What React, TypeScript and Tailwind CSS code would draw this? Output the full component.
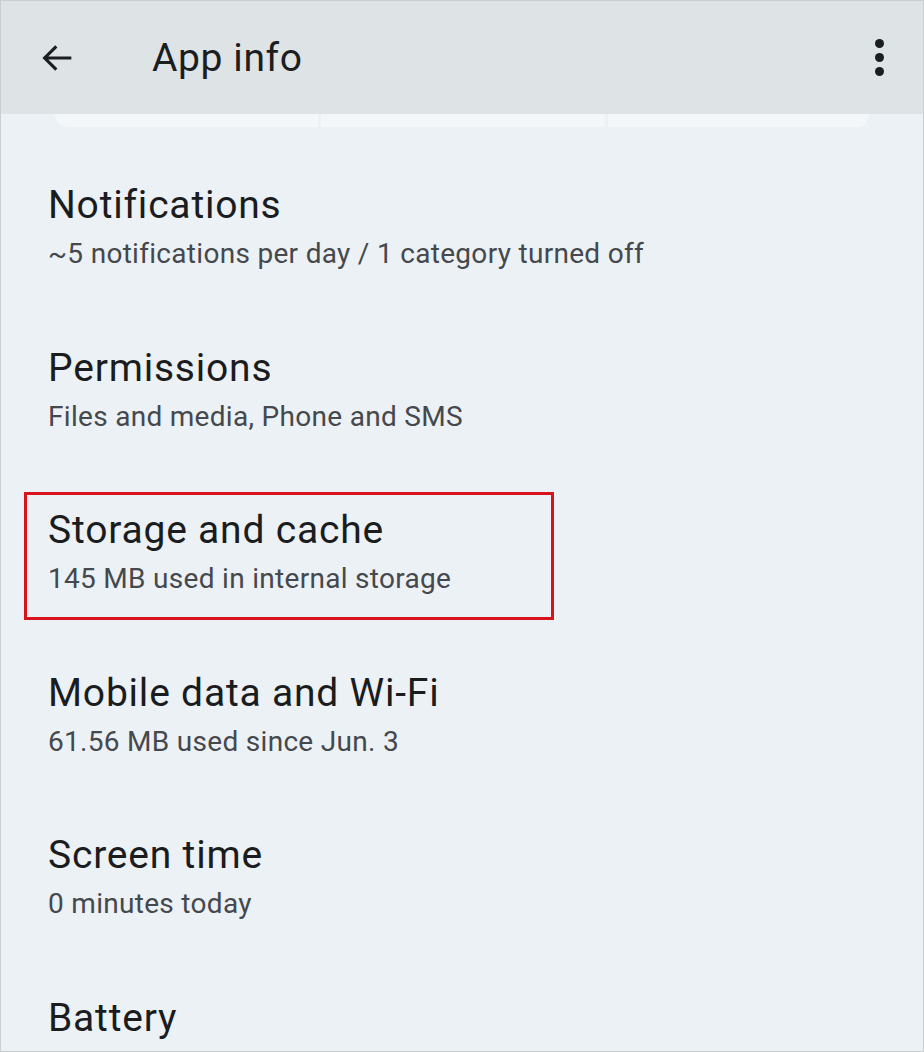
const rows = [
  { title: "Notifications", sub: "~5 notifications per day / 1 category turned off" },
  { title: "Permissions", sub: "Files and media, Phone and SMS" },
  { title: "Storage and cache", sub: "145 MB used in internal storage", marked: true },
  { title: "Mobile data and Wi-Fi", sub: "61.56 MB used since Jun. 3" },
  { title: "Screen time", sub: "0 minutes today" },
  { title: "Battery", sub: "" },
];

export default function App() {
  return (
    <div
      className="w-[924px] h-[1052px] overflow-hidden border border-[#c9ced1] bg-[#ecf1f5] flex flex-col"
      style={{ fontFamily: "Roboto, 'Noto Sans', sans-serif" }}
    >
      <header className="h-[113px] shrink-0 bg-[#dee3e6] flex items-center">
        <svg className="ml-[37px] w-[40px] h-[40px]" viewBox="0 0 24 24" fill="none" stroke="#1c1d1f" strokeWidth="1.9">
          <path d="M20 12H4.5M11 5l-7 7 7 7" />
        </svg>
        <h1 className="ml-[74px] mt-[2px] text-[39px] leading-none text-[#1c1d1f] tracking-[0.6px]">App info</h1>
        <div className="ml-auto mr-[39px] flex flex-col items-center gap-[5px]">
          <span className="w-[9px] h-[9px] rounded-full bg-[#1c1d1f]" />
          <span className="w-[9px] h-[9px] rounded-full bg-[#1c1d1f]" />
          <span className="w-[9px] h-[9px] rounded-full bg-[#1c1d1f]" />
        </div>
      </header>

      <div className="mx-[54px] h-[13px] shrink-0 grid grid-cols-[263px_284px_1fr] gap-[3px]">
        <div className="bg-[#f3f7fa] rounded-bl-[14px]" />
        <div className="bg-[#f3f7fa]" />
        <div className="bg-[#f3f7fa] rounded-br-[14px]" />
      </div>

      <div className="pt-[20px]">
        {rows.map((r) => (
          <div key={r.title} className="relative h-[162.5px] pl-[47px] pt-[34px]">
            <div className="text-[39px] leading-[48px] text-[#1b1c1e] tracking-[0.8px]">{r.title}</div>
            {r.sub && (
              <div className="mt-[7px] text-[28px] leading-[36px] text-[#45484c] tracking-[0.3px]">{r.sub}</div>
            )}
            {r.marked && (
              <div className="absolute left-[23px] top-[20px] w-[530px] h-[128px] border-[3px] border-[#d7141c]" />
            )}
          </div>
        ))}
      </div>
    </div>
  );
}
